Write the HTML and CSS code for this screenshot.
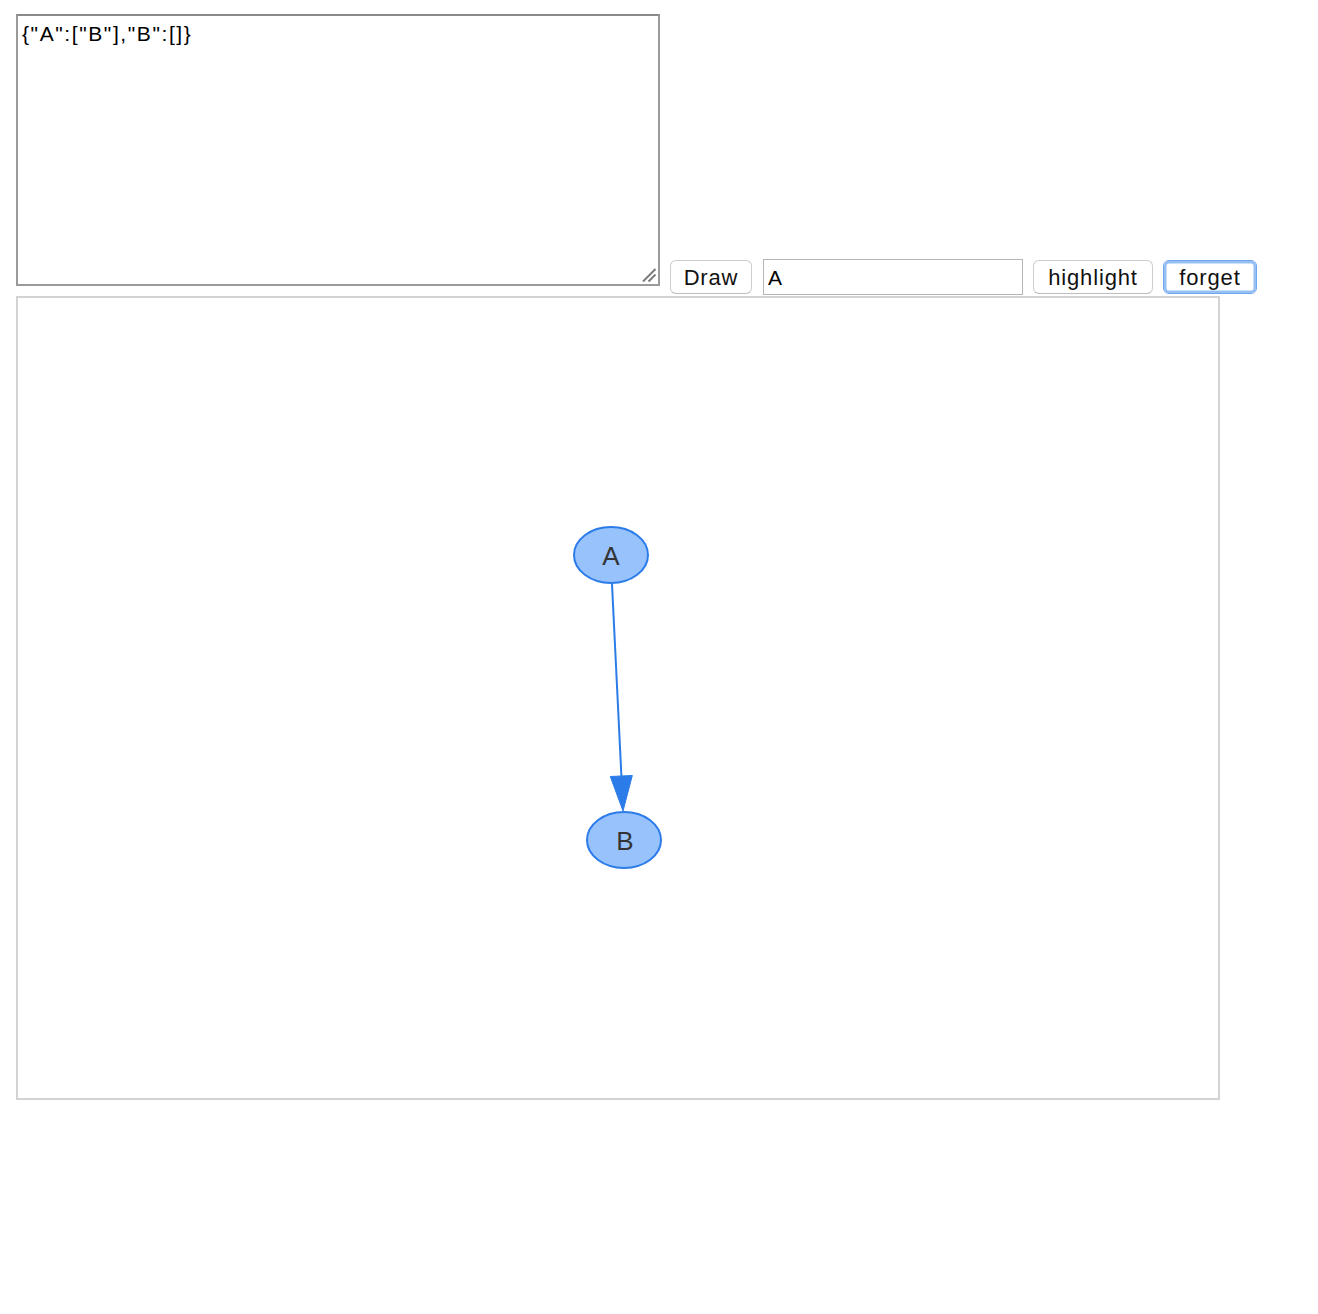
FILE: index.html
```html
<!DOCTYPE html>
<html>
<head>
<meta charset="utf-8">
<link rel="stylesheet" href="styles.css">
</head>
<body>
<div class="page">
  <div class="controls">
    <div class="source-wrap">
      <textarea class="source">{"A":["B"],"B":[]}</textarea>
      <svg class="grip" width="16" height="16" viewBox="0 0 16 16" xmlns="http://www.w3.org/2000/svg">
        <line x1="2" y1="14.5" x2="14.5" y2="2" stroke="#7a7a7a" stroke-width="2"/>
        <line x1="7.5" y1="14.5" x2="14.5" y2="7.5" stroke="#7a7a7a" stroke-width="2"/>
      </svg>
    </div>
    <button class="btn btn-draw">Draw</button>
    <input class="node-input" type="text" value="A">
    <button class="btn btn-highlight">highlight</button>
    <button class="btn btn-forget">forget</button>
  </div>
  <div class="network">
    <svg class="graph" width="1200" height="800" viewBox="0 0 1200 800" xmlns="http://www.w3.org/2000/svg">
      <line x1="594" y1="286" x2="603.6" y2="482" stroke="#2B7CE9" stroke-width="2"/>
      <polygon points="605,513 614.3,477.5 592.3,478.5" fill="#2B7CE9" stroke="#2B7CE9" stroke-width="1" stroke-linejoin="round"/>
      <ellipse cx="593" cy="257" rx="37" ry="28" fill="#97C2FC" stroke="#2B7CE9" stroke-width="2"/>
      <text x="593" y="266.5" class="label">A</text>
      <ellipse cx="606" cy="542" rx="37" ry="28" fill="#97C2FC" stroke="#2B7CE9" stroke-width="2"/>
      <text x="607" y="551.5" class="label">B</text>
    </svg>
  </div>
</div>
</body>
</html>
```

FILE: styles.css
```css
html, body {
  margin: 0;
  padding: 0;
  background: #ffffff;
}

.page {
  padding: 14px 16px;
}

.controls {
  display: flex;
  align-items: flex-end;
}

.source-wrap {
  position: relative;
  width: 644px;
  height: 272px;
  margin: 0 0 10px 0;
}

.source {
  display: block;
  box-sizing: border-box;
  width: 644px;
  height: 272px;
  margin: 0;
  padding: 6px 4px 4px 4px;
  border: 2px solid #9a9a9a;
  border-top-color: #8a8a8a;
  font-family: "Liberation Sans", Arial, sans-serif;
  font-size: 21px;
  letter-spacing: 1.6px;
  line-height: 24px;
  color: #000;
  resize: none;
  outline: none;
}

.grip {
  position: absolute;
  right: 3px;
  bottom: 3px;
}

.btn {
  box-sizing: border-box;
  height: 34px;
  margin: 0 0 2px 10px;
  padding: 1px 0 0 0;
  background: #ffffff;
  border: 1px solid #cdcdcd;
  border-bottom-color: #bdbdbd;
  border-radius: 6px;
  font-family: "Liberation Sans", Arial, sans-serif;
  font-size: 22px;
  letter-spacing: 0.85px;
  color: #111;
  line-height: 30px;
}

.btn-draw {
  width: 82px;
}

.btn-highlight {
  width: 120px;
}

.btn-forget {
  width: 94px;
  border: 1px solid #6fa6ec;
  box-shadow: inset 0 0 0 2.5px #96bff5;
}

.node-input {
  box-sizing: border-box;
  width: 260px;
  height: 36px;
  margin: 0 0 1px 11px;
  padding: 2px 4px 0 4px;
  border: 1px solid #b5b5b5;
  border-radius: 0;
  font-family: "Liberation Sans", Arial, sans-serif;
  font-size: 21px;
  color: #000;
  outline: none;
}

.network {
  box-sizing: border-box;
  width: 1204px;
  height: 804px;
  border: 2px solid #d3d3d3;
}

.graph {
  display: block;
}

.label {
  font-family: "Liberation Sans", Arial, sans-serif;
  font-size: 26px;
  fill: #343434;
  text-anchor: middle;
}
```
